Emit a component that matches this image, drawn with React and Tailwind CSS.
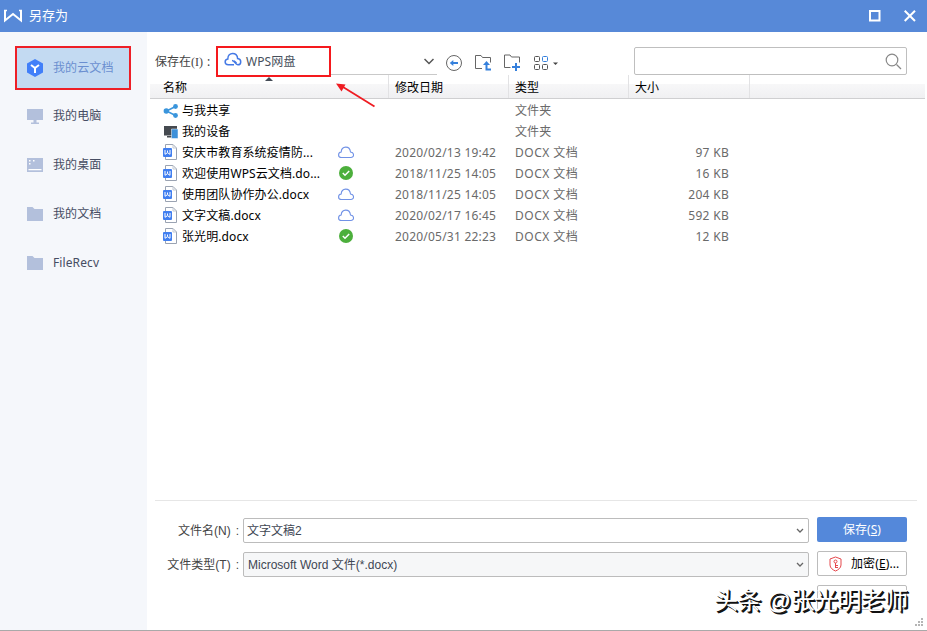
import React from 'react';

const navItems = [
  { icon: 'pc', label: '我的电脑' },
  { icon: 'desk', label: '我的桌面' },
  { icon: 'folder', label: '我的文档' },
  { icon: 'folder', label: 'FileRecv' },
];

const files = [
  { icon: 'share', name: '与我共享', type: '文件夹' },
  { icon: 'device', name: '我的设备', type: '文件夹' },
  { icon: 'doc', name: '安庆市教育系统疫情防...', state: 'cloud', date: '2020/02/13 19:42', type: 'DOCX 文档', size: '97 KB' },
  { icon: 'doc', name: '欢迎使用WPS云文档.do...', state: 'ok', date: '2018/11/25 14:05', type: 'DOCX 文档', size: '16 KB' },
  { icon: 'doc', name: '使用团队协作办公.docx', state: 'cloud', date: '2018/11/25 14:05', type: 'DOCX 文档', size: '204 KB' },
  { icon: 'doc', name: '文字文稿.docx', state: 'cloud', date: '2020/02/17 16:45', type: 'DOCX 文档', size: '592 KB' },
  { icon: 'doc', name: '张光明.docx', state: 'ok', date: '2020/05/31 22:23', type: 'DOCX 文档', size: '12 KB' },
];

function NavIcon({ kind }) {
  return (
    <svg width="16" height="16" viewBox="0 0 16 16" fill="#b3c0dc" className="shrink-0">
      {kind === 'pc' && <path d="M0 1h16v11H0zM6.500 12h3v2.500H12V16H4v-1.500h2.500z" />}
      {kind === 'desk' && (
        <>
          <path d="M0 1h16v14H0z" />
          <path d="M2 3h1.500v1.500H2zM6 3h1.500v1.500H6zM2 6h1.500v1.500H2zM1.500 12h13v1.200h-13z" fill="#fff" />
        </>
      )}
      {kind === 'folder' && <path d="M0 1h5.500l2 2H16v12H0z" />}
    </svg>
  );
}

function FileIcon({ kind }) {
  if (kind === 'share') {
    return (
      <svg width="16" height="14" viewBox="0 0 16 14" className="shrink-0">
        <path d="M12.500 2.500 3.500 7l9 4.500" fill="none" stroke="#3a95dc" strokeWidth="1.500" />
        <g fill="#3a95dc">
          <circle cx="3.300" cy="7" r="2.700" />
          <circle cx="12.500" cy="2.500" r="2.400" />
          <circle cx="12.500" cy="11.500" r="2.400" />
        </g>
      </svg>
    );
  }
  if (kind === 'device') {
    return (
      <svg width="16" height="14" viewBox="0 0 16 14" className="shrink-0">
        <path d="M1 1h13v9.500H1zM4 11h5v1.500H4z" fill="#454a50" />
        <path d="M8.500 4H15v9.500H8.500z" fill="#3d90d9" stroke="#fff" strokeWidth=".5" />
      </svg>
    );
  }
  return (
    <svg width="16" height="16" viewBox="0 0 16 16" className="mb-px shrink-0">
      <path d="M2.500.5h7.500l3.500 3.500v11.500h-11z" fill="#fff" stroke="#9aa3b2" />
      <path d="M10 .5V4h3.500" fill="none" stroke="#c3c9d2" />
      <rect x="0" y="4" width="9" height="9" rx="1" fill="#417ff0" />
      <path d="M2 6v4.300l2.500-1.600L7 10.300V6M4.500 6.500v2" fill="none" stroke="#fff" />
    </svg>
  );
}

function StateIcon({ kind }) {
  if (kind === 'ok') {
    return (
      <svg width="16" height="14" viewBox="0 0 16 14" className="mb-0.5">
        <circle cx="8" cy="7" r="7" fill="#4caf3c" />
        <path d="m4.800 7 2.200 2.200 4.200-4.200" fill="none" stroke="#fff" strokeWidth="1.500" />
      </svg>
    );
  }
  if (kind === 'cloud') {
    return (
      <svg width="16" height="14" viewBox="0 0 16 14" fill="none" stroke="#7192e6" strokeWidth="1.100" className="mb-0.5">
        <path d="M3.500 12.500C-.5 12.500-.2 7.400 3.200 7 3.500.7 11.700.3 12.500 7c4 .2 4 5.500.3 5.500z" />
      </svg>
    );
  }
  return null;
}

function Toolbar() {
  return (
    <div className="flex h-[43px] items-start">
      <div className="mt-[19px] ml-2 w-[61px] whitespace-nowrap leading-[22px] text-[#444]">
        保存在<span className="font-['Liberation_Serif']">(I)</span>
        <span className="ml-1">:</span>
      </div>
      <div className="z-10 mt-[14px] flex h-[31px] w-[115px] items-center border-2 border-[#f5191d] pl-[6px] text-[#47505c]">
        <svg width="18" height="16" viewBox="0 0 18 16" fill="none" stroke="#4479e5" strokeWidth="1.500" className="-mt-1">
          <path d="M10 12.800H4.200C.2 12.800.2 7.500 3.800 7 3.600-.4 13.600-.3 13.600 6.500c4.300.7 4 6.300.2 6.300-2.800 0-2.800-4.300-5.800-4.300" />
          <path d="m10 8.800 2.500 2.300" />
        </svg>
        <span className="ml-1 whitespace-nowrap tracking-[0.1px]">WPS网盘</span>
      </div>
      <div className="flex h-[43px] w-[106px] items-start justify-end border-b border-[#c9c9c9] pr-[3px]">
        <svg width="10" height="7" viewBox="0 0 10 7" className="mt-[26px]" fill="none" stroke="#555" strokeWidth="1.500">
          <path d="m.5 1 4.500 4.500L9.500 1" />
        </svg>
      </div>
      <div className="mt-[22px] ml-2 flex w-[114px] items-center">
        <svg width="18" height="18" viewBox="0 0 18 18" fill="none" className="shrink-0">
          <circle cx="9" cy="9" r="7.500" stroke="#666" />
          <path d="M13 9H6" stroke="#3580dc" strokeWidth="2" />
          <path d="M4.800 9 8.300 6v6z" fill="#3580dc" />
        </svg>
        <svg width="18" height="18" viewBox="0 0 18 18" fill="none" className="ml-[11px] shrink-0">
          <path d="M8 14.500H1.500V1.500H7l1.500 2h8v5" stroke="#666" />
          <path d="M12.500 9.500V15.500h4.500" stroke="#3580dc" strokeWidth="2" />
          <path d="m12.500 7-3.500 4h7z" fill="#3580dc" />
        </svg>
        <svg width="18" height="18" viewBox="0 0 18 18" fill="none" className="ml-[11px] shrink-0">
          <path d="M7.500 13.500h-6V1H7l1.500 2h8v5.500" stroke="#666" />
          <path d="M13 9v8M9 13h8" stroke="#3580dc" strokeWidth="2" />
        </svg>
        <svg width="26" height="16" viewBox="0 0 26 16" fill="none" stroke="#555" className="ml-[12px] shrink-0">
          <rect x="1.500" y="1.500" width="5" height="5" rx="1" />
          <rect x="9.500" y="1.500" width="5" height="5" rx="1" stroke="#3580dc" />
          <rect x="1.500" y="9.500" width="5" height="5" rx="1" />
          <rect x="9.500" y="9.500" width="5" height="5" rx="1" />
          <path d="M20 7.500h5L22.500 10z" fill="#444" stroke="none" />
        </svg>
      </div>
      <div className="mt-[15px] ml-[75px] flex h-7 w-[273px] items-center justify-end rounded-[2px] border border-[#bfbfbf] pr-1">
        <svg width="17" height="17" viewBox="0 0 17 17" fill="none" stroke="#888" strokeWidth="1.200">
          <circle cx="7" cy="7" r="5.800" />
          <path d="m11.500 11.500 4.500 4.500" />
        </svg>
      </div>
    </div>
  );
}

function TableHeader() {
  const cell = 'flex h-[23px] items-center border-r border-[#e2e2e4] pt-0.5 pl-1.5';
  return (
    <div className="relative ml-[3px] flex h-6 w-[775px] border-b border-[#cfcfd1] bg-[linear-gradient(#fff_40%,#f7f7f8_41%,#f0f0f2)] text-black">
      <div className="flex h-[23px] w-[239px] items-center border-r border-[#e2e2e4] pt-0.5 pl-[13px]">名称</div>
      <div className={cell + ' w-[120px]'}>修改日期</div>
      <div className={cell + ' w-[120px]'}>类型</div>
      <div className={cell + ' w-[121px]'}>大小</div>
      <svg width="8" height="5" viewBox="0 0 8 5" className="absolute top-0.5 left-[115px]">
        <path d="M4 0 8 4H0z" fill="#444b55" />
      </svg>
    </div>
  );
}

function Field({ label, value, valueClass, boxClass }) {
  return (
    <div className="flex h-[25px] items-center">
      <div className="flex w-[92px] justify-end whitespace-nowrap pr-1 font-['Liberation_Sans','Noto_Sans_CJK_SC',sans-serif] text-[#444]">
        <span>{label}</span>
        <span className="ml-[5px]">:</span>
      </div>
      <div className={'flex h-[25px] w-[566px] items-center justify-between rounded-[2px] border border-[#bcbcbc] pr-1 ' + boxClass}>
        <span className={"whitespace-nowrap font-['Liberation_Sans','Noto_Sans_CJK_SC',sans-serif] text-[#404653] " + valueClass}>{value}</span>
        <svg width="8" height="6" viewBox="0 0 8 6" fill="none" stroke="#666" strokeWidth="1.300">
          <path d="m1 1 3 3 3-3" />
        </svg>
      </div>
    </div>
  );
}

export default function App() {
  return (
    <div className="relative flex h-[631px] w-[927px] flex-col overflow-hidden border-b border-[#a9a9a9] bg-white font-['Noto_Sans','Noto_Sans_CJK_SC',sans-serif] text-xs">
      <header className="flex h-8 shrink-0 items-center bg-[#5789d8] text-white">
        <svg width="20" height="14" viewBox="0 0 20 14" fill="none" stroke="#fff" strokeWidth="2" className="ml-[3px]">
          <path d="M2 1v10.500L10 5l8 6.500V1" />
          <path d="M1 1.500h3M16 1.500h3" strokeWidth="1.300" />
        </svg>
        <span className="ml-[6px] text-[13px]">另存为</span>
        <svg width="12" height="12" viewBox="0 0 12 12" fill="none" stroke="#fff" strokeWidth="2" className="ml-auto">
          <path d="M1 1h9.500v9.500H1z" />
        </svg>
        <svg width="12" height="12" viewBox="0 0 12 12" fill="none" stroke="#fff" strokeWidth="2" className="mr-[11px] ml-[23px]">
          <path d="m.7.7 10.300 10.300M11 .7.7 11" />
        </svg>
      </header>

      <div className="flex flex-1">
        <aside className="w-[147px] shrink-0 bg-[#f5f7fb] pt-3.5 text-[#464d63]">
          <div className="ml-[15px] flex h-11 w-[116px] items-center border-2 border-[#ee1f27] bg-[#c3daf2] pl-[10px] text-[#6b8fd0]">
            <svg width="16" height="18" viewBox="0 0 16 18">
              <path d="M8 0 16 4.500v9L8 18l-8-4.500v-9z" fill="#417ff9" />
              <path d="M4 6l4 3 4-3M8 9v5" fill="none" stroke="#fff" strokeWidth="2" />
            </svg>
            <span className="ml-[10px] whitespace-nowrap pb-px tracking-[0.1px]">我的云文档</span>
          </div>
          {navItems.map((item) => (
            <div key={item.label} className="flex h-[49px] items-center pt-0.5 pl-[27px]">
              <NavIcon kind={item.icon} />
              <span className="ml-[10px] tracking-[0.1px]">{item.label}</span>
            </div>
          ))}
        </aside>

        <main className="flex w-[780px] flex-col">
          <Toolbar />
          <TableHeader />
          <div className="h-[401px] pt-px">
            {files.map((f) => (
              <div key={f.name} className="flex h-[21px] items-center whitespace-nowrap text-[#6a6a6a]">
                <div className="flex w-[191px] items-center pl-4 text-black">
                  <FileIcon kind={f.icon} />
                  <span className="ml-[3px] tracking-[0.1px]">{f.name}</span>
                </div>
                <div className="flex w-[57px]">
                  <StateIcon kind={f.state} />
                </div>
                <div className="w-[120px] tracking-[0.22px]">{f.date}</div>
                <div className={f.size ? 'w-[120px] tracking-[0.5px]' : 'w-[120px] tracking-[0.1px]'}>{f.type}</div>
                <div className="w-[94px] text-right tracking-[0.3px]">{f.size}</div>
              </div>
            ))}
          </div>
          <div className="ml-2 w-[762px] border-t border-[#e6e6e6]" />
          <div className="flex pl-1">
            <div className="flex flex-col gap-[9px] pt-[17px]">
              <Field label="文件名(N)" value="文字文稿2" valueClass="ml-[3px]" boxClass="bg-white" />
              <Field label="文件类型(T)" value="Microsoft Word 文件(*.docx)" valueClass="ml-1" boxClass="bg-[#f6f7f8]" />
            </div>
            <div className="ml-2 flex w-[90px] flex-col gap-[9px] pt-4">
              <button className="h-[25px] rounded-[2px] bg-[#5488da] text-white">
                保存(<u>S</u>)
              </button>
              <button className="flex h-[25px] items-center whitespace-nowrap rounded-[2px] border border-[#bcbcbc] bg-white pl-[11px] text-black">
                <svg width="13" height="16" viewBox="0 0 13 16" fill="none" stroke="#e5484d">
                  <path d="M6.500 1 12 3v6c0 3-3 5-5.500 6C4 14 1 12 1 9V3z" />
                  <circle cx="6.500" cy="5.500" r="1.500" />
                  <path d="M6.500 7v5M6.500 9.500H9M6.500 11.500H9" />
                </svg>
                <span className="ml-[9px] tracking-[0.1px]">加密(<u>E</u>)...</span>
              </button>
              <div className="h-[25px] rounded-[2px] border border-[#bcbcbc] bg-white" />
            </div>
          </div>
        </main>
      </div>

      <svg width="42" height="28" viewBox="0 0 42 28" className="absolute top-[81px] left-[335px]">
        <path d="M39.500 25.500 8 6" stroke="#ef1c22" strokeWidth="1.800" />
        <path d="M1 2.500 10.500 3.500 6.500 10.500z" fill="#ef1c22" />
      </svg>

      <div className="absolute top-[585px] left-[714px] whitespace-nowrap font-['Liberation_Sans','Noto_Sans_CJK_SC',sans-serif] text-[24px] leading-8 tracking-[-0.6px] text-white [text-shadow:1px_1px_0_#111,2px_2px_0_#111]">
        头条 @张光明老师
      </div>

      <svg width="9" height="9" viewBox="0 0 9 9" fill="#b5b5b5" className="absolute right-[3px] bottom-[3px]">
        <path d="M6 0h2v2H6zM3 3h2v2H3zM6 3h2v2H6zM0 6h2v2H0zM3 6h2v2H3zM6 6h2v2H6z" />
      </svg>
    </div>
  );
}
